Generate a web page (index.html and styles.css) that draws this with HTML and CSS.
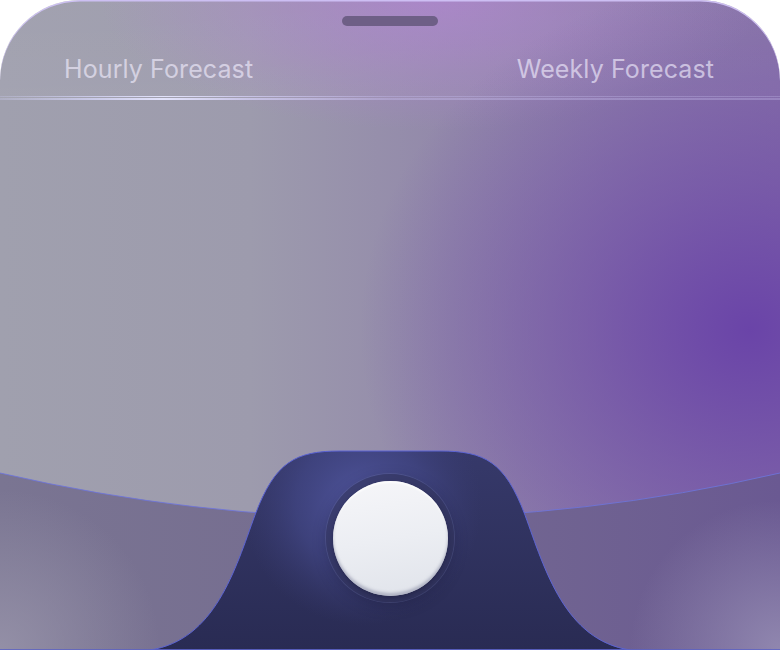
FILE: index.html
```html
<!DOCTYPE html>
<html lang="en">
<head>
<meta charset="utf-8">
<title>Forecast</title>
<link rel="stylesheet" href="styles.css">
</head>
<body>
<div class="card">
  <header class="header">
    <div class="handle"></div>
    <nav class="tabs">
      <span class="tab">Hourly Forecast</span>
      <span class="tab">Weekly Forecast</span>
    </nav>
    <div class="separator"></div>
  </header>
  <main class="body"></main>
  <footer class="dock">
    <svg class="dock-bg" width="780" height="200" viewBox="0 0 780 200" aria-hidden="true">
      <defs>
        <linearGradient id="lower" x1="0" y1="0" x2="1" y2="0">
          <stop offset="0" stop-color="#7a7592"/>
          <stop offset="0.45" stop-color="#756c90"/>
          <stop offset="1" stop-color="#6a5992"/>
        </linearGradient>
        <radialGradient id="cornerR" cx="780" cy="200" r="150" gradientUnits="userSpaceOnUse">
          <stop offset="0" stop-color="#978fb4" stop-opacity="0.85"/>
          <stop offset="1" stop-color="#978fb4" stop-opacity="0"/>
        </radialGradient>
        <radialGradient id="cornerL" cx="0" cy="200" r="160" gradientUnits="userSpaceOnUse">
          <stop offset="0" stop-color="#9894aa" stop-opacity="0.85"/>
          <stop offset="1" stop-color="#9894aa" stop-opacity="0"/>
        </radialGradient>
        <linearGradient id="navyBase" x1="0" y1="0" x2="0" y2="1">
          <stop offset="0" stop-color="#36396a"/>
          <stop offset="1" stop-color="#292b53"/>
        </linearGradient>
        <radialGradient id="navyGlow" cx="362" cy="55" r="120" gradientUnits="userSpaceOnUse">
          <stop offset="0" stop-color="#5257a0" stop-opacity="1"/>
          <stop offset="0.55" stop-color="#454a8c" stop-opacity="0.6"/>
          <stop offset="1" stop-color="#3a3d75" stop-opacity="0"/>
        </radialGradient>
      </defs>
      <path d="M0,23 Q390,113 780,23 L780,200 L0,200 Z" fill="url(#lower)"/>
      <path d="M0,23 Q390,113 780,23 L780,200 L0,200 Z" fill="url(#cornerR)"/>
      <path d="M0,23 Q390,113 780,23 L780,200 L0,200 Z" fill="url(#cornerL)"/>
      <path d="M0,23 Q390,113 780,23" fill="none" stroke="#6d74dc" stroke-width="1" stroke-opacity="0.85"/>
      <path d="M150,200 C215,190 235,120 255,65 C275,12 295,1 340,1 L440,1 C485,1 505,12 525,65 C545,120 565,190 630,200 Z" fill="url(#navyBase)"/>
      <path d="M150,200 C215,190 235,120 255,65 C275,12 295,1 340,1 L440,1 C485,1 505,12 525,65 C545,120 565,190 630,200 Z" fill="url(#navyGlow)" stroke="#5c64d4" stroke-width="1"/>
      <line x1="0" y1="199.5" x2="780" y2="199.5" stroke="#5b62c4" stroke-width="1.2" stroke-opacity="0.8"/>
    </svg>
    <div class="ring">
      <button class="knob" type="button" aria-label="Action"></button>
    </div>
  </footer>
</div>
</body>
</html>
```

FILE: styles.css
```css
* {
  box-sizing: border-box;
}

html, body {
  margin: 0;
  padding: 0;
  background: #ffffff;
}

body {
  font-family: "Inter", "Liberation Sans", sans-serif;
}

.card {
  width: 780px;
  height: 650px;
  display: flex;
  flex-direction: column;
  border-radius: 80px 80px 0 0;
  overflow: hidden;
  position: relative;
  background:
    radial-gradient(ellipse 390px 350px at 750px 330px, rgba(106, 68, 168, 1) 0%, rgba(110, 74, 168, 0.62) 42%, rgba(120, 90, 170, 0) 100%),
    radial-gradient(ellipse 330px 130px at 430px 0px, rgba(172, 132, 204, 0.85) 0%, rgba(172, 132, 204, 0) 100%),
    linear-gradient(90deg, #a0a0ae 0%, #9d9bad 32%, #9288aa 58%, #8874a8 100%);
  box-shadow: inset 0 1.5px 0 rgba(206, 192, 246, 0.95);
}

.header {
  display: flex;
  flex-direction: column;
  padding-top: 16px;
  background: linear-gradient(180deg, rgba(255, 255, 255, 0.02), rgba(255, 255, 255, 0.04));
}

.handle {
  align-self: center;
  width: 96px;
  height: 10px;
  border-radius: 5px;
  background: #6e5f86;
}

.tabs {
  display: flex;
  justify-content: space-between;
  padding: 0 66px 0 64px;
  margin-top: 28px;
}

.tab {
  font-size: 25px;
  line-height: 30px;
  font-weight: 400;
  letter-spacing: 0.1px;
  color: rgba(242, 238, 254, 0.64);
}

.separator {
  margin-top: 12px;
  height: 4px;
  border-top: 1px solid transparent;
  border-image: linear-gradient(90deg, rgba(200, 200, 235, 0.3) 0%, rgba(215, 215, 250, 0.75) 12%, rgba(230, 230, 255, 0.95) 21%, rgba(215, 210, 250, 0.7) 32%, rgba(195, 185, 235, 0.4) 50%, rgba(190, 180, 230, 0.35) 100%) 1;
  border-bottom: 2px solid rgba(95, 90, 122, 0.65);
  box-shadow: 0 -4px 5px -2px rgba(200, 200, 240, 0.2);
}

.body {
  flex: 1;
}

.dock {
  position: relative;
  height: 200px;
  display: flex;
  justify-content: center;
  align-items: flex-start;
  padding-top: 24px;
}

.dock-bg {
  position: absolute;
  left: 0;
  top: 0;
  display: block;
}

.ring {
  position: relative;
  width: 128px;
  height: 128px;
  border-radius: 50%;
  display: flex;
  align-items: center;
  justify-content: center;
  background: rgba(48, 50, 88, 0.6);
  box-shadow: 0 0 0 1px rgba(110, 115, 165, 0.3), 0 4px 14px rgba(20, 20, 45, 0.3);
}

.knob {
  width: 115px;
  height: 115px;
  border-radius: 50%;
  border: none;
  padding: 0;
  background: linear-gradient(170deg, #f6f6f9 0%, #eceef3 50%, #e0e3ea 100%);
  box-shadow: inset 0 -3px 3px rgba(150, 154, 175, 0.65), inset 0 2px 2px rgba(255, 255, 255, 0.8), 0 2px 4px rgba(15, 15, 40, 0.35);
}
```
